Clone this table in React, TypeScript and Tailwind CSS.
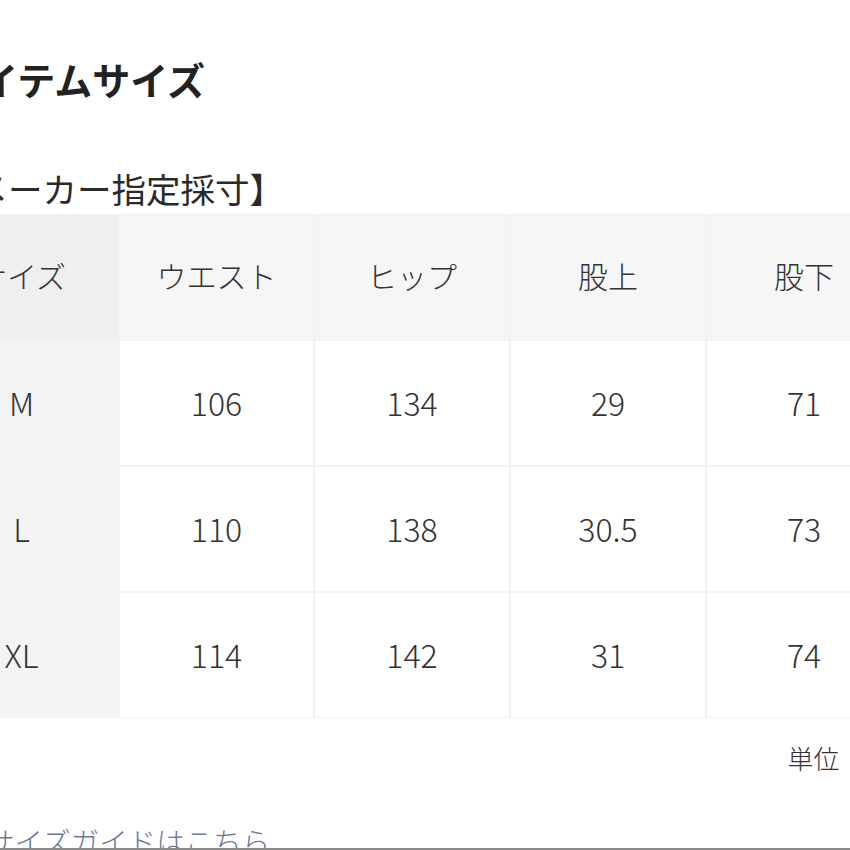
import React from "react";

const headers = ["サイズ", "ウエスト", "ヒップ", "股上", "股下"];
const rows = [
  ["M", "106", "134", "29", "71"],
  ["L", "110", "138", "30.5", "73"],
  ["XL", "114", "142", "31", "74"],
];

export default function App() {
  return (
    <div
      className="w-[850px] h-[850px] overflow-hidden bg-white relative text-[#333]"
      style={{ fontFamily: '"Noto Sans CJK JP", "Noto Sans", sans-serif' }}
    >
      <div className="ml-[-75px] w-[977px]">
        <h1 className="pl-[19px] pt-[55px] text-[38px] leading-[48px] font-bold text-[#222] whitespace-nowrap">
          アイテムサイズ
        </h1>
        <h2 className="pl-[14px] mt-[63px] text-[34.5px] leading-[44px] font-normal text-[#2a2a2a] whitespace-nowrap">
          【メーカー指定採寸】
        </h2>
        <div className="mt-[5px] grid grid-cols-[193px_193px_194px_194px_194px] gap-[2px] bg-white font-light">
          {headers.map((h, i) => (
            <div
              key={h}
              className={`h-[124px] flex items-center justify-center pb-[3px] text-[30px] ${
                i === 0 ? "bg-[#efefef]" : "bg-[#f6f6f6]"
              } outline outline-1 outline-[#f3f3f3]`}
            >
              {h}
            </div>
          ))}
          {rows.map((r) =>
            r.map((c, i) => (
              <div
                key={r[0] + i}
                className={`h-[124px] flex items-center justify-center pb-[3px] text-[32px] ${
                  i === 0 ? "bg-[#f4f4f4]" : "bg-white"
                } outline outline-1 outline-[#f2f2f2]`}
              >
                {c}
              </div>
            ))
          )}
        </div>
        <div className="mt-[26px] pr-0 text-right text-[26px] leading-[30px] font-light whitespace-nowrap">
          単位：cm
        </div>
        <div className="mt-[50px] pl-[61px] text-[28.5px] leading-[36px] font-light text-[#6b7896] whitespace-nowrap">
          サイズガイドはこちら
        </div>
      </div>
      <div className="absolute left-0 bottom-0 w-full h-[2px] bg-[#8a8a8a]" />
    </div>
  );
}
